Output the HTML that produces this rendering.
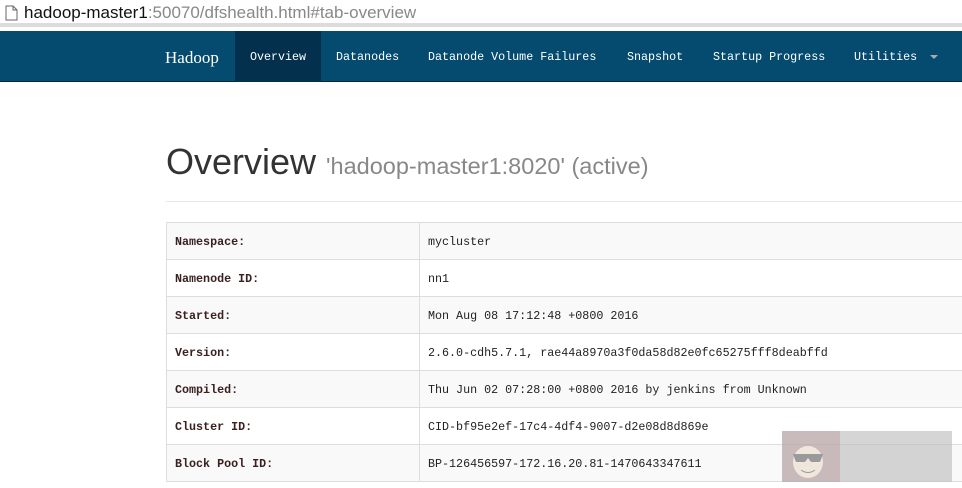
<!DOCTYPE html>
<html><head><style>
*{margin:0;padding:0;box-sizing:border-box}
body{width:962px;height:488px;overflow:hidden;background:#fff;font-family:"Liberation Mono",monospace;position:relative}
.addr{position:absolute;left:0;top:0;width:962px;height:27px;background:#fff;font-family:"Liberation Sans",sans-serif;font-size:17px;color:#111;border-bottom:4px solid #dcdcdc}
.addr span.g{color:#888}
.nav{position:absolute;left:0;top:31px;width:962px;height:51px;background:#054b6f;border-bottom:1px solid #01263a}
.nav a{position:absolute;top:0;height:51px;line-height:53px;color:#fff;font-size:11.7px;white-space:nowrap}
.act{background:#03304d}
h1{position:absolute;left:166px;top:141px;font-family:"Liberation Sans",sans-serif;font-weight:400;font-size:36px;color:#333;white-space:nowrap}
h1 small{font-size:23.5px;color:#888}
.hr{position:absolute;left:166px;top:201px;width:796px;border-top:1px solid #e8e8e8}
table{position:absolute;left:166px;top:222px;width:800px;border-collapse:collapse;font-size:11.7px;color:#222}
td{height:37px;border:1px solid #ddd;padding:1px 8px 0;vertical-align:middle}
td:first-child{width:253px;font-weight:bold;color:#3a2020}
tr:nth-child(odd) td{background:#f9f9f9}
</style></head><body>
<div class="addr"><svg style="position:absolute;left:5px;top:5px" width="13" height="16"><path d="M1 1h7l4 4v10H1z" fill="#fff" stroke="#666"/><path d="M8 1v4h4" fill="none" stroke="#666"/></svg><span style="position:absolute;left:24px;top:3px">hadoop-master1<span class="g">:50070/dfshealth.html#tab-overview</span></span></div>
<div class="nav">
<a style="left:165px;font-family:'Liberation Serif',serif;font-size:17px">Hadoop</a>
<a class="act" style="left:235px;width:86px;text-align:center">Overview</a>
<a style="left:336px">Datanodes</a>
<a style="left:428px">Datanode Volume Failures</a>
<a style="left:627px">Snapshot</a>
<a style="left:713px">Startup Progress</a>
<a style="left:854px">Utilities <span style="display:inline-block;margin-left:6px;border-left:4px solid transparent;border-right:4px solid transparent;border-top:4px solid #aaa;vertical-align:middle"></span></a>
</div>
<h1>Overview <small>'hadoop-master1:8020' (active)</small></h1>
<div class="hr"></div>
<table>
<tr><td>Namespace:</td><td>mycluster</td></tr>
<tr><td>Namenode ID:</td><td>nn1</td></tr>
<tr><td>Started:</td><td>Mon Aug 08 17:12:48 +0800 2016</td></tr>
<tr><td>Version:</td><td>2.6.0-cdh5.7.1, rae44a8970a3f0da58d82e0fc65275fff8deabffd</td></tr>
<tr><td>Compiled:</td><td>Thu Jun 02 07:28:00 +0800 2016 by jenkins from Unknown</td></tr>
<tr><td>Cluster ID:</td><td>CID-bf95e2ef-17c4-4df4-9007-d2e08d8d869e</td></tr>
<tr><td>Block Pool ID:</td><td>BP-126456597-172.16.20.81-1470643347611</td></tr>
</table>
<div style="position:absolute;left:782px;top:431px;width:170px;height:51px;background:rgba(190,190,190,.65)"></div>
<div style="position:absolute;left:782px;top:431px;width:58px;height:51px;background:rgba(180,140,140,.35)"></div>
<svg style="position:absolute;left:790px;top:440px" width="36" height="40"><ellipse cx="18" cy="22" rx="15" ry="16" fill="#efe7dc"/><path d="M3 14h30l-3 8h-9l-3-4-3 4H6z" fill="#9a9a9a"/><path d="M11 30q7 5 14 0" stroke="#999" fill="none"/></svg>
</body></html>
